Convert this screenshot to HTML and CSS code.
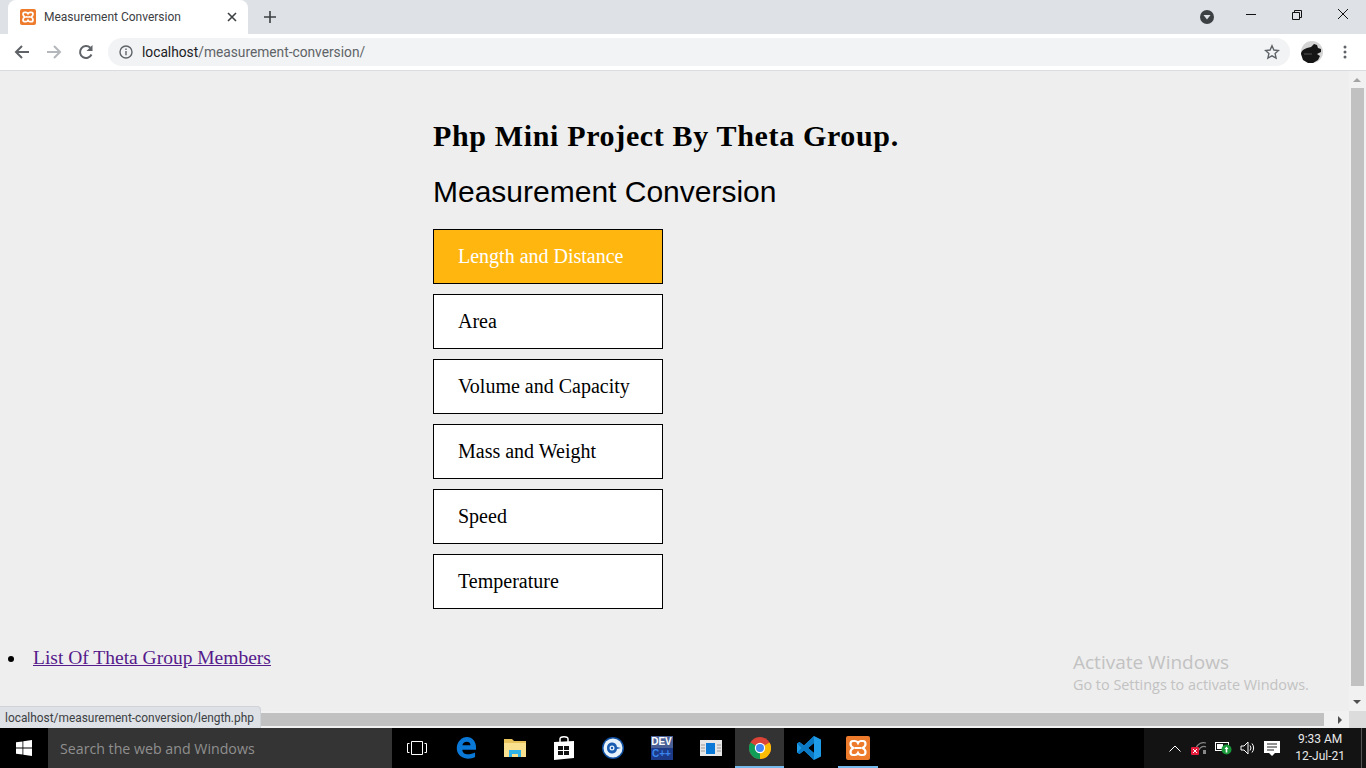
FILE: index.html
```html
<!DOCTYPE html>
<html lang="en">
<head>
    <meta charset="UTF-8">
    <title>Measurement Conversion</title>
    <link rel="stylesheet" href="styles.css">
</head>
<body>
    <div class="tabstrip">
        <div class="tab">
            <svg class="tab-icon" width="16" height="16" viewBox="0 0 24 24"><rect width="24" height="24" rx="3" fill="#ee7b2c"/><path d="M7 5h2q2 0 3 2 1-2 3-2h2q2.500 0 2.500 3 0 2.500-3 4 3 1.500 3 4 0 3-2.500 3h-2q-2 0-3-2-1 2-3 2H7q-2.500 0-2.500-3 0-2.500 3-4-3-1.500-3-4 0-3 2.500-3zM9 12h6" fill="none" stroke="#fff" stroke-width="2.600"/></svg>
            <span class="tab-title">Measurement Conversion</span>
            <svg class="tab-close" width="10" height="10" viewBox="0 0 10 10"><path d="M1 1l8 8M9 1l-8 8" stroke="#3c4043" stroke-width="1.600"/></svg>
        </div>
        <svg class="new-tab" width="12" height="12" viewBox="0 0 12 12"><path d="M6 0v12M0 6h12" stroke="#3c4043" stroke-width="1.600"/></svg>
        <div class="window-controls">
            <svg class="profile-drop" width="14" height="14" viewBox="0 0 14 14"><circle cx="7" cy="7" r="7" fill="#3c4043"/><path d="M3.500 5h7L7 9.500z" fill="#dee1e6"/></svg>
            <svg class="win-btn" width="46" height="30" viewBox="0 0 46 30"><path d="M18 14.500h10" stroke="#111" stroke-width="1"/></svg>
            <svg class="win-btn" width="46" height="30" viewBox="0 0 46 30"><path d="M18.500 12.500h7v7h-7zM20.500 12.500v-2h7v7h-2" fill="none" stroke="#111" stroke-width="1"/></svg>
            <svg class="win-btn" width="46" height="30" viewBox="0 0 46 30"><path d="M18 9l10 10M28 9L18 19" stroke="#111" stroke-width="1"/></svg>
        </div>
    </div>
    <div class="toolbar">
        <svg class="tool-icon" width="16" height="16" viewBox="0 0 16 16"><path d="M15 8H2M8 2L2 8l6 6" fill="none" stroke="#5f6368" stroke-width="2"/></svg>
        <svg class="tool-icon" width="16" height="16" viewBox="0 0 16 16"><path d="M1 8h13M8 2l6 6-6 6" fill="none" stroke="#b4b7bb" stroke-width="2"/></svg>
        <svg class="tool-icon" width="16" height="16" viewBox="0 0 16 16"><path d="M13.500 10.500A6 6 0 1 1 12.300 3.800" fill="none" stroke="#5f6368" stroke-width="2"/><path d="M14.500 1v6h-6z" fill="#5f6368"/></svg>
        <div class="omnibox">
            <svg width="14" height="14" viewBox="0 0 14 14"><circle cx="7" cy="7" r="6" fill="none" stroke="#5f6368" stroke-width="1.400"/><path d="M7 6v4.200M7 3.600v1.400" stroke="#5f6368" stroke-width="1.400"/></svg>
            <span class="url"><span class="url-host">localhost</span>/measurement-conversion/</span>
            <svg class="star" width="16" height="16" viewBox="0 0 16 16"><path d="M8 1.800l1.900 4.200 4.600.5-3.400 3.100 1 4.500L8 11.800l-4.100 2.300 1-4.500L1.500 6.500 6.100 6z" fill="none" stroke="#5f6368" stroke-width="1.400"/></svg>
        </div>
        <svg class="avatar" width="22" height="22" viewBox="0 0 22 22"><circle cx="11" cy="11" r="11" fill="#d4d4d4"/><path d="M0 13c0-3 3-5 6-6l4-1 3-3 3 1 1 3 3 1 0 3-4 2 3 2-2 4-5 3H7l-5-3z" fill="#151515"/><path d="M3 13h8" stroke="#555"/></svg>
        <svg class="menu-dots" width="4" height="16" viewBox="0 0 4 16"><circle cx="2" cy="3" r="1.500" fill="#5f6368"/><circle cx="2" cy="8" r="1.500" fill="#5f6368"/><circle cx="2" cy="13" r="1.500" fill="#5f6368"/></svg>
    </div>

    <div class="viewport">
        <div class="page-row">
            <main class="page">
                <div class="converter">
                    <h1>Php Mini Project By Theta Group.</h1>
                    <h2>Measurement Conversion</h2>
                    <nav class="units">
                        <a class="unit active">Length and Distance</a>
                        <a class="unit">Area</a>
                        <a class="unit">Volume and Capacity</a>
                        <a class="unit">Mass and Weight</a>
                        <a class="unit">Speed</a>
                        <a class="unit">Temperature</a>
                    </nav>
                </div>
                <ul class="links">
                    <li><a href="#">List Of Theta Group Members</a></li>
                </ul>
            </main>
            <div class="vscroll">
                <span class="arrow-up"></span>
                <div class="vthumb"></div>
                <span class="arrow-down"></span>
            </div>
        </div>
        <div class="hscroll">
            <div class="hthumb"></div>
            <span class="arrow-right"></span>
            <div class="corner"></div>
        </div>
        <div class="status-bubble">localhost/measurement-conversion/length.php</div>
        <div class="watermark">
            <div class="wm-title">Activate Windows</div>
            <div class="wm-sub">Go to Settings to activate Windows.</div>
        </div>
    </div>

    <footer class="taskbar">
        <div class="start">
            <svg width="16" height="16" viewBox="0 0 16 16"><path d="M0 2.300l6.500-.9v6.200H0zM7.300 1.300L16 0v7.600H7.300zM0 8.400h6.500v6.200L0 13.700zM7.300 8.400H16V16l-8.700-1.300z" fill="#fff"/></svg>
        </div>
        <div class="search">Search the web and Windows</div>
        <div class="task-icons">
            <div class="task-icon"><svg width="20" height="14" viewBox="0 0 20 14"><path d="M4.500.5h11v13h-11zM2.500 2.500h-2v9h2M17.500 2.500h2v9h-2" fill="none" stroke="#fff" stroke-width="1"/></svg></div>
            <div class="task-icon"><svg width="20" height="22" viewBox="0 0 22 24"><path d="M1 14C0 6 6 0 12 0c6 0 10 5 10 11v3H7c0 6 8 6 14 3v5c-8 4-19 1-20-8zM7 9h9c0-5-8-5-9 0z" fill="#0a78d7"/></svg></div>
            <div class="task-icon"><svg width="22" height="20" viewBox="0 0 22 20"><path d="M0 1h8l2 2h12v16H0z" fill="#e8c25a"/><path d="M0 5h22v14H0z" fill="#f8e08e"/><path d="M5 19v-7h12v7h-3v-3H8v3z" fill="#2fb3e8"/></svg></div>
            <div class="task-icon"><svg width="22" height="24" viewBox="0 0 22 24"><path d="M1 6l20-1v17L1 24z" fill="#fff"/><path d="M7 6V3c0-3 8-3 8 0v3" fill="none" stroke="#fff" stroke-width="1.500"/><path d="M5 10h5v4H5zM11 10h5v4h-5zM5 15h5v4H5zM11 15h5v4h-5z" fill="#111"/></svg></div>
            <div class="task-icon"><svg width="22" height="22" viewBox="0 0 22 22"><circle cx="11" cy="11" r="11" fill="#0f4fa0"/><circle cx="11" cy="11" r="9.500" fill="#e8f2fb"/><path d="M5 11a5 5 0 0 1 10-1l4 1-4 1a5 5 0 0 1-10-1z" fill="#1a5cb0"/><circle cx="10" cy="11" r="2.500" fill="#e8f2fb"/><circle cx="10" cy="11" r="1.200" fill="#1a5cb0"/></svg></div>
            <div class="task-icon"><div class="dev-icon"><span class="dev-top">DEV</span><span class="dev-bot">C++</span></div></div>
            <div class="task-icon"><svg width="22" height="16" viewBox="0 0 22 16"><rect width="22" height="16" fill="#e6e6e6"/><rect x="6" y="3" width="9" height="11" fill="#0a78d7"/><path d="M1 5h4M1 8h4M1 11h4M17 5h4M17 8h4M17 11h4" stroke="#999"/></svg></div>
            <div class="task-icon active-app open-app"><svg width="22" height="22" viewBox="0 0 22 22"><circle cx="11" cy="11" r="11" fill="#db4437"/><path d="M11 11L1.470 5.500A11 11 0 0 0 11 22z" fill="#0f9d58"/><path d="M11 11v11A11 11 0 0 0 20.530 5.500z" fill="#fbbc05"/><circle cx="11" cy="11" r="5.200" fill="#fff"/><circle cx="11" cy="11" r="4" fill="#4285f4"/></svg></div>
            <div class="task-icon"><svg width="24" height="24" viewBox="0 0 24 24"><path d="M17 0l7 3.500v17L17 24 7 14.500 2.500 18 0 16.500v-9L2.500 6 7 9.500zM17 7l-6 5 6 5z" fill="#1f9ce8"/><path d="M17 0v7l-6 5 6 5v7L7 14.500 2.500 18 0 16.500 4.500 12 0 7.500 2.500 6 7 9.500z" fill="#0b79c4"/></svg></div>
            <div class="task-icon open-app narrow-line"><svg width="24" height="24" viewBox="0 0 24 24"><rect width="24" height="24" rx="2" fill="#ee7b2c"/><path d="M7 5h2q2 0 3 2 1-2 3-2h2q2.500 0 2.500 3 0 2.500-3 4 3 1.500 3 4 0 3-2.500 3h-2q-2 0-3-2-1 2-3 2H7q-2.500 0-2.500-3 0-2.500 3-4-3-1.500-3-4 0-3 2.500-3zM9 12h6" fill="none" stroke="#fff" stroke-width="2.200"/></svg></div>
        </div>
        <div class="tray">
            <svg class="chevron" width="12" height="7" viewBox="0 0 12 7"><path d="M.5 6.500L6 1l5.500 5.500" fill="none" stroke="#fff"/></svg>
            <svg width="16" height="14" viewBox="0 0 16 14"><path d="M5 7a8 8 0 0 1 10-5M8 9a5 5 0 0 1 7-3" fill="none" stroke="#888" stroke-width="1.300"/><rect x="12" y="9" width="3" height="4" fill="#888"/><rect y="6" width="8" height="8" rx="1" fill="#e51c3c"/><path d="M2 8l4 4M6 8l-4 4" stroke="#fff"/></svg>
            <svg width="17" height="14" viewBox="0 0 17 14"><rect x=".5" y="1.500" width="13" height="8" fill="none" stroke="#fff"/><rect x="2" y="3" width="6" height="5" fill="#fff"/><circle cx="11.500" cy="8.500" r="5" fill="#1a9a3a"/><path d="M11.500 5.500l2 2.500h-1.200v3.500h-1.600V8H9.500z" fill="#fff"/></svg>
            <svg width="16" height="14" viewBox="0 0 16 14"><path d="M1 5h3l4-4v12L4 9H1z" fill="none" stroke="#fff"/><path d="M10 4.500a4 4 0 0 1 0 5M12 2.500a7 7 0 0 1 0 9" fill="none" stroke="#fff"/></svg>
            <svg class="notify" width="16" height="15" viewBox="0 0 16 15"><path d="M0 0h16v12h-5l-3 3-3-3H0z" fill="#fff"/><path d="M3 3h10M3 6h10M3 9h7" stroke="#222"/></svg>
            <div class="clock">
                <div>9:33 AM</div>
                <div>12-Jul-21</div>
            </div>
            <div class="show-desktop"></div>
        </div>
    </footer>
</body>
</html>
```

FILE: styles.css
```css
html, body {
    margin: 0;
    padding: 0;
    height: 768px;
    overflow: hidden;
}

body {
    display: flex;
    flex-direction: column;
    width: 1366px;
    font-family: Roboto, "Open Sans", sans-serif;
    background-color: #eeeeee;
}

/* browser chrome */
.tabstrip {
    display: flex;
    align-items: flex-end;
    height: 34px;
    padding-left: 8px;
    background-color: #dee1e6;
    flex-shrink: 0;
}

.tab {
    display: flex;
    align-items: center;
    box-sizing: border-box;
    width: 240px;
    height: 34px;
    padding: 0 11px 0 12px;
    background: #fff;
    border-radius: 8px 8px 0 0;
}

.tab-title {
    flex: 1;
    margin-left: 8px;
    font-size: 12px;
    color: #3c4043;
}

.new-tab {
    margin: 0 0 11px 16px;
}

.window-controls {
    display: flex;
    align-items: flex-start;
    margin-left: auto;
    align-self: flex-start;
}

.profile-drop {
    margin: 10px 14px 0 0;
}

.win-btn {
    display: block;
}

.toolbar {
    display: flex;
    align-items: center;
    box-sizing: border-box;
    height: 37px;
    padding: 0 19px 1px 14px;
    background: #fff;
    border-bottom: 1px solid #dadce0;
    flex-shrink: 0;
}

.tool-icon {
    margin-right: 16px;
}

.omnibox {
    display: flex;
    align-items: center;
    flex: 1;
    height: 28px;
    margin: 0 11px 0 -2px;
    padding: 0 10px 0 11px;
    background: #f1f3f4;
    border-radius: 14px;
}

.url {
    flex: 1;
    margin-left: 9px;
    font-size: 13.75px;
    color: #5f6368;
}

.url-host {
    color: #202124;
}

.avatar {
    margin-right: 20px;
}

/* page area */
.viewport {
    position: relative;
    display: flex;
    flex-direction: column;
    height: 657px;
    flex-shrink: 0;
}

.page-row {
    display: flex;
    flex: 1;
    min-height: 0;
}

.page {
    flex: 1;
    color: #000;
    font-family: "Liberation Serif", serif;
}

.converter {
    margin-left: 433px;
    padding-top: 48px;
}

h1 {
    margin: 0;
    font-size: 30px;
    line-height: 34px;
    letter-spacing: 0.65px;
    font-weight: bold;
}

h2 {
    margin: 21px 0 19px;
    font-family: "Liberation Sans", sans-serif;
    font-size: 30px;
    line-height: 36px;
    font-weight: normal;
}

.units {
    display: flex;
    flex-direction: column;
    gap: 10px;
}

.unit {
    display: block;
    box-sizing: border-box;
    width: 230px;
    height: 55px;
    padding-left: 24px;
    background: #fff;
    border: 1px solid #000;
    font-size: 20px;
    line-height: 53px;
}

.unit.active {
    background: #ffb710;
    color: #fff;
}

.links {
    margin: 35px 0 0;
    padding-left: 26px;
    font-size: 19.5px;
    line-height: 27px;
}

.links a {
    margin-left: 7px;
    color: #551a8b;
}

.vscroll {
    position: relative;
    width: 17px;
    background: #f1f1f1;
}

.vthumb {
    position: absolute;
    top: 17px;
    left: 2px;
    width: 13px;
    height: 598px;
    background: #c1c1c1;
}

.arrow-up, .arrow-down {
    position: absolute;
    left: 4px;
    width: 0;
    height: 0;
    border-left: 4px solid transparent;
    border-right: 4px solid transparent;
}

.arrow-up {
    top: 7px;
    border-bottom: 4px solid #a3a3a3;
}

.arrow-down {
    bottom: 7px;
    border-top: 4px solid #505050;
}

.hscroll {
    display: flex;
    align-items: center;
    height: 17px;
    background: #f1f1f1;
    flex-shrink: 0;
}

.hthumb {
    width: 1324px;
    height: 13px;
    background: #c1c1c1;
}

.arrow-right {
    width: 0;
    height: 0;
    margin-left: 14px;
    border-top: 4px solid transparent;
    border-bottom: 4px solid transparent;
    border-left: 4px solid #505050;
}

.corner {
    width: 17px;
    height: 17px;
    margin-left: 7px;
    background: #dcdcdc;
}

.status-bubble {
    position: absolute;
    left: 0;
    bottom: 0;
    box-sizing: border-box;
    width: 261px;
    height: 22px;
    padding: 3px 0 0 5px;
    background: #dee1e6;
    border: 1px solid #cfd2d6;
    border-left: none;
    border-bottom: none;
    border-radius: 0 4px 0 0;
    font-size: 11.9px;
    line-height: 16px;
    color: #3c4043;
    white-space: nowrap;
}

.watermark {
    position: absolute;
    left: 1073px;
    top: 578px;
    font-family: "Open Sans", sans-serif;
    color: #c2c2c2;
}

.wm-title {
    font-size: 19px;
    line-height: 26px;
}

.wm-sub {
    font-size: 14.4px;
    line-height: 19px;
}

/* taskbar */
.taskbar {
    display: flex;
    align-items: stretch;
    height: 40px;
    background: #000;
    flex-shrink: 0;
}

.start {
    display: flex;
    align-items: center;
    justify-content: center;
    width: 48px;
}

.search {
    box-sizing: border-box;
    width: 344px;
    padding: 1px 0 0 12px;
    background: #343434;
    color: #8f8f8f;
    font-family: "Open Sans", sans-serif;
    font-size: 14.2px;
    line-height: 39px;
}

.task-icons {
    display: flex;
}

.task-icon {
    display: flex;
    align-items: center;
    justify-content: center;
    box-sizing: border-box;
    width: 49px;
    height: 40px;
}

.active-app {
    background: #333;
}

.open-app {
    border-bottom: 2px solid #76b9ed;
    padding-top: 2px;
}

.narrow-line {
    width: 40px;
    margin: 0 4.5px;
}

.dev-icon {
    display: flex;
    flex-direction: column;
    width: 22px;
    height: 24px;
    background: #1c3a88;
    font-family: "Liberation Sans", sans-serif;
    font-size: 10px;
    font-weight: bold;
    line-height: 12px;
    text-align: center;
    overflow: hidden;
}

.dev-top {
    background: #4a5f95;
    color: #fff;
}

.dev-bot {
    color: #3a86ee;
}

.tray {
    display: flex;
    align-items: center;
    gap: 8px;
    margin-left: auto;
    padding-left: 25px;
    background: #131313;
}

.chevron {
    margin-right: 2px;
}

.clock {
    margin-left: 7px;
    color: #e8e8e8;
    font-size: 12px;
    line-height: 17px;
    text-align: center;
}

.show-desktop {
    width: 1px;
    height: 40px;
    margin: 0 4px 0 8px;
    background: #555;
}
```
